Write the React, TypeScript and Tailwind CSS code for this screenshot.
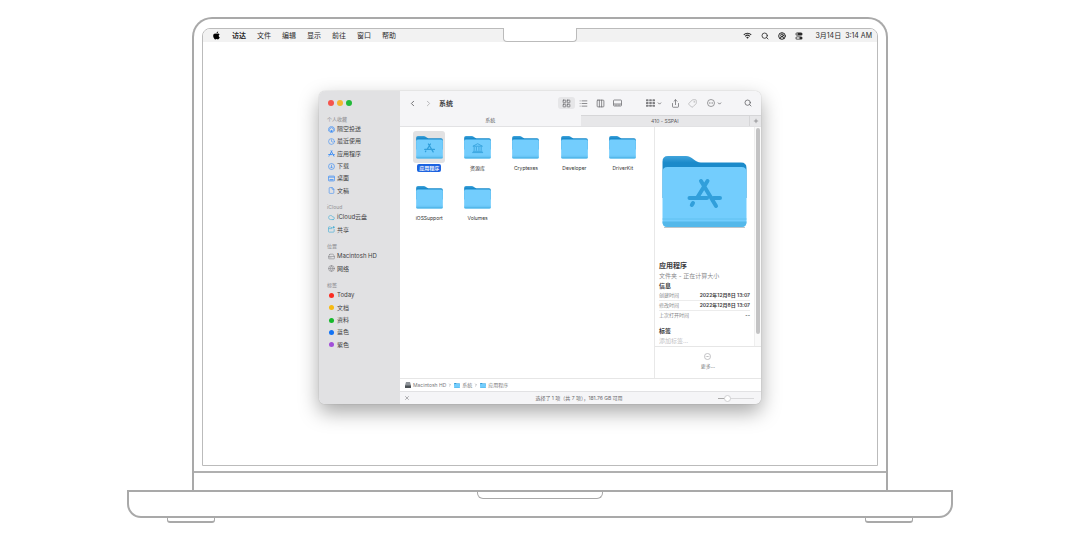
import type { ReactNode } from "react";
import {
  ChevronDown,
  ChevronLeft,
  ChevronRight,
  CircleUserRound,
  Clock,
  Cloud,
  Columns3,
  File,
  Globe,
  HardDrive,
  LayoutGrid,
  List,
  Plus,
  Search,
  Share,
  Tag,
  X,
} from "lucide-react";
import { FaApple } from "react-icons/fa";

type Glyph = "apps" | "library";

const menus = ["文件", "编辑", "显示", "前往", "窗口", "帮助"];

const folders: { name: string; glyph?: Glyph; selected?: boolean }[] = [
  { name: "应用程序", glyph: "apps", selected: true },
  { name: "资源库", glyph: "library" },
  { name: "Cryptexes" },
  { name: "Developer" },
  { name: "DriverKit" },
  { name: "iOSSupport" },
  { name: "Volumes" },
];

const details = [
  { label: "创建时间", value: "2022年12月8日 13:07" },
  { label: "修改时间", value: "2022年12月8日 13:07" },
  { label: "上次打开时间", value: "--" },
];

const blue = "size-[7px] text-[#3b8cf5]";
const teal = "size-[7px] text-[#45aed6]";
const gray = "size-[7px] text-[#85858a]";

function AppsGlyph() {
  return (
    <path
      d="M39 25l15 25M45.500 25L35 42M31 47l-1.200 2M27.500 42H45M51.500 42H58"
      fill="none"
      stroke="#319fdb"
      strokeWidth="4"
      strokeLinecap="round"
    />
  );
}

function LibraryGlyph() {
  return (
    <g fill="none" stroke="#319fdb" strokeWidth="2.600">
      <path d="M28 32l15-8 15 8z" />
      <path d="M32 34v12M39 34v12M47 34v12M54 34v12M28 48h30M26 52h34" />
    </g>
  );
}

function Folder({ className, glyph }: { className: string; glyph?: Glyph }) {
  return (
    <svg viewBox="0 0 85 72" className={className} aria-hidden="true">
      <defs>
        <linearGradient id="folder-back" x1="0" y1="0" x2="0" y2="1">
          <stop offset="0" stopColor="#42a5dc" />
          <stop offset="0.16" stopColor="#1b8aca" />
          <stop offset="1" stopColor="#1b8aca" />
        </linearGradient>
      </defs>
      <path d="M2 71.500h81" stroke="#5c6f7a" strokeOpacity="0.4" />
      <path
        d="M.5 5.500Q.5 0 6 0h18c6 0 9 6.500 15 6.500h40q5.500 0 5.500 5.500v30H.5z"
        fill="url(#folder-back)"
      />
      <path
        d="M.5 16q0-5 5-5h74q5 0 5 5v50q0 5-5 5h-74q-5 0-5-5z"
        fill="#73cdfd"
      />
      <path d="M.5 65.500h84v.5q0 5-5 5h-74q-5 0-5-5z" fill="#54b8ea" />
      <path d="M.5 63h84" stroke="#61c0f0" strokeWidth="1" />
      {glyph === "apps" && <AppsGlyph />}
      {glyph === "library" && <LibraryGlyph />}
    </svg>
  );
}

function ControlCenterIcon() {
  return (
    <svg viewBox="0 0 16 16" className="size-2" aria-hidden="true">
      <rect x="1" y="1" width="14" height="6" rx="3" fill="currentColor" />
      <circle cx="4" cy="4" r="1.600" fill="#f2f2f2" />
      <rect x="1" y="9" width="14" height="6" rx="3" fill="currentColor" />
      <rect x="2.500" y="10.400" width="7" height="3.200" rx="1.600" fill="#f2f2f2" />
    </svg>
  );
}

function WifiIcon() {
  return (
    <svg viewBox="0 0 20 16" className="h-[7px] w-[9px]" aria-hidden="true">
      <g fill="none" stroke="currentColor" strokeWidth="2.400">
        <path d="M1.500 6.500a12 12 0 0 1 17 0" />
        <path d="M4.800 9.800a7.400 7.400 0 0 1 10.400 0" />
      </g>
      <path d="M10 15.500l-3-3a4.200 4.200 0 0 1 6 0z" fill="currentColor" />
    </svg>
  );
}

function AirDropIcon() {
  return (
    <svg viewBox="0 0 16 16" className={blue} fill="none" stroke="currentColor" strokeWidth="1.600">
      <path d="M3.500 13.500a7 7 0 1 1 9 0" />
      <path d="M5 11.500a4.400 4.400 0 1 1 6 0" />
      <path d="M8 8.500l4 6.500H4z" fill="currentColor" stroke="none" />
    </svg>
  );
}

function AppStoreIcon() {
  return (
    <svg
      viewBox="0 0 16 16"
      className={blue}
      fill="none"
      stroke="currentColor"
      strokeWidth="2.200"
      strokeLinecap="round"
    >
      <path d="M7 2l6.500 12M9 2L4.500 10.500M2.800 13.300l-.4.700M1.500 10.500h7.500M12.500 10.500h2" />
    </svg>
  );
}

function DownloadIcon() {
  return (
    <svg viewBox="0 0 16 16" className={blue} fill="none" stroke="currentColor" strokeWidth="1.500">
      <circle cx="8" cy="8" r="6.800" />
      <path d="M8 4v7.500M5 8.500l3 3 3-3" />
    </svg>
  );
}

function DesktopIcon() {
  return (
    <svg viewBox="0 0 16 16" className={blue} fill="none" stroke="currentColor" strokeWidth="1.600">
      <rect x="1" y="2.500" width="14" height="11" rx="1.500" />
      <path d="M1 5h14" />
      <path d="M3.500 11h9" strokeWidth="2.400" />
    </svg>
  );
}

function SharedIcon() {
  return (
    <svg viewBox="0 0 16 16" className={teal} fill="none" stroke="currentColor" strokeWidth="1.500">
      <path d="M10 3.500H7L5.500 2H2.500Q1 2 1 3.500v9Q1 14 2.500 14h10q1.500 0 1.500-1.500V7M1 6h9" />
      <circle cx="13" cy="3" r="1.600" fill="currentColor" />
    </svg>
  );
}

function GalleryIcon() {
  return (
    <svg viewBox="0 0 18 16" className="h-2 w-[9px]" fill="none" stroke="currentColor" strokeWidth="1.500">
      <rect x="1" y="2" width="16" height="12" rx="1.500" />
      <path d="M1 10h16" />
      <path d="M3.500 12.200h11" strokeDasharray="2 1" />
    </svg>
  );
}

function GroupIcon() {
  return (
    <svg viewBox="0 0 18 16" className="h-2 w-[9px]" fill="currentColor">
      {[1, 6.500, 12].map((y) => (
        <g key={y}>
          <rect x="0" y={y - 0.5} width="5" height="3.800" rx="1" opacity="0.85" />
          <rect x="6.500" y={y - 0.5} width="5" height="3.800" rx="1" opacity="0.85" />
          <rect x="13" y={y - 0.5} width="5" height="3.800" rx="1" opacity="0.85" />
        </g>
      ))}
    </svg>
  );
}

function MoreIcon({ className }: { className: string }) {
  return (
    <svg viewBox="0 0 16 16" className={className} fill="none" stroke="currentColor" strokeWidth="1.300">
      <circle cx="8" cy="8" r="7" />
      <path d="M4 8h1.800M7.100 8h1.800M10.200 8H12" strokeWidth="1.800" />
    </svg>
  );
}

function Dot({ className }: { className: string }) {
  return <span className={`size-[5px] rounded-full ${className}`} />;
}

const sections: { title: string; height: string; items: { name: string; icon: ReactNode }[] }[] = [
  {
    title: "个人收藏",
    height: "h-[74px]",
    items: [
      { name: "隔空投送", icon: <AirDropIcon /> },
      { name: "最近使用", icon: <Clock className={blue} /> },
      { name: "应用程序", icon: <AppStoreIcon /> },
      { name: "下载", icon: <DownloadIcon /> },
      { name: "桌面", icon: <DesktopIcon /> },
      { name: "文稿", icon: <File className={blue} /> },
    ],
  },
  {
    title: "iCloud",
    height: "h-[25px]",
    items: [
      { name: "iCloud云盘", icon: <Cloud className={teal} /> },
      { name: "共享", icon: <SharedIcon /> },
    ],
  },
  {
    title: "位置",
    height: "h-[25px]",
    items: [
      { name: "Macintosh HD", icon: <HardDrive className={gray} /> },
      { name: "网络", icon: <Globe className={gray} /> },
    ],
  },
  {
    title: "标签",
    height: "h-[62px]",
    items: [
      { name: "Today", icon: <Dot className="bg-[#fb2c22]" /> },
      { name: "文档", icon: <Dot className="bg-[#f6b911]" /> },
      { name: "资料", icon: <Dot className="bg-[#16b92b]" /> },
      { name: "蓝色", icon: <Dot className="bg-[#1273f5]" /> },
      { name: "紫色", icon: <Dot className="bg-[#a24fd8]" /> },
    ],
  },
];

function MenuBar() {
  return (
    <header className="flex h-[13px] items-center justify-between rounded-t-[7px] bg-[#f2f2f2] pr-[5px] pl-[9px] text-[7px] text-[#2b2b2b]">
      <nav className="flex items-center gap-[11px]">
        <button aria-label="苹果菜单">
          <FaApple className="size-[9px] text-black" />
        </button>
        <button className="font-bold">访达</button>
        {menus.map((name) => (
          <button key={name}>{name}</button>
        ))}
      </nav>
      <div className="flex items-center gap-[9px]">
        <button aria-label="无线局域网">
          <WifiIcon />
        </button>
        <button aria-label="搜索">
          <Search className="size-2" strokeWidth={2.5} />
        </button>
        <button aria-label="用户">
          <CircleUserRound className="size-2" strokeWidth={3} />
        </button>
        <button aria-label="控制中心">
          <ControlCenterIcon />
        </button>
        <button className="ml-[3px] flex gap-1 whitespace-nowrap">
          <span>3月14日</span>
          <span>3:14 AM</span>
        </button>
      </div>
    </header>
  );
}

function Sidebar() {
  return (
    <aside className="flex w-[81px] shrink-0 flex-col gap-1.5 bg-[#e1e1e3] pl-2">
      <div className="mb-[3px] flex h-[15px] items-end gap-[3px] pl-[9px] -ml-2">
        <button aria-label="关闭" className="size-1.5 rounded-full bg-[#f5544d]" />
        <button aria-label="最小化" className="size-1.5 rounded-full bg-[#f3b62f]" />
        <button aria-label="缩放" className="size-1.5 rounded-full bg-[#22b93a]" />
      </div>
      {sections.map((section) => (
        <section key={section.title}>
          <h2 className="h-2 text-[5px] leading-[8px] font-medium text-[#9a9a9e]">
            {section.title}
          </h2>
          <ul className={`flex flex-col ${section.height}`}>
            {section.items.map((item) => (
              <li key={item.name} className="flex flex-1 items-center">
                <button className="flex items-center gap-0.5 text-[6px] text-[#3f3f42]">
                  <span className="flex w-2 justify-center">{item.icon}</span>
                  {item.name}
                </button>
              </li>
            ))}
          </ul>
        </section>
      ))}
    </aside>
  );
}

function Toolbar() {
  return (
    <div className="flex h-6 items-center bg-[#f5f5f7] pr-[9px] pl-2 text-[#6a6a6d]">
      <button aria-label="后退">
        <ChevronLeft className="size-[9px]" strokeWidth={2.5} />
      </button>
      <button aria-label="前进" className="ml-[7px] text-[#b5b5b8]">
        <ChevronRight className="size-[9px]" strokeWidth={2.5} />
      </button>
      <h1 className="ml-1.5 text-[7px] font-bold text-[#444446]">系统</h1>
      <div className="ml-auto flex items-center">
        <button aria-label="图标" className="flex h-3 w-[17px] items-center justify-center rounded-[3px] bg-[#e6e6e8]">
          <LayoutGrid className="size-[9px]" />
        </button>
        <button aria-label="列表" className="flex w-[17px] justify-center">
          <List className="size-[9px]" />
        </button>
        <button aria-label="分栏" className="flex w-[17px] justify-center">
          <Columns3 className="size-[9px]" />
        </button>
        <button aria-label="画廊" className="flex w-[17px] justify-center">
          <GalleryIcon />
        </button>
      </div>
      <button aria-label="分组" className="ml-5 flex items-center gap-0.5">
        <GroupIcon />
        <ChevronDown className="size-[5px]" strokeWidth={4} />
      </button>
      <button aria-label="共享" className="ml-[5px] flex w-[17px] justify-center">
        <Share className="size-[9px]" />
      </button>
      <button aria-label="标签" className="flex w-[17px] justify-center text-[#b0b0b3]">
        <Tag className="size-[9px] rotate-90" />
      </button>
      <button aria-label="更多操作" className="ml-1.5 flex items-center gap-0.5">
        <MoreIcon className="size-2" />
        <ChevronDown className="size-[5px]" strokeWidth={4} />
      </button>
      <button aria-label="搜索" className="ml-[22px]">
        <Search className="size-2" strokeWidth={2.5} />
      </button>
    </div>
  );
}

function TabBar() {
  return (
    <div className="flex h-3 border-b border-[#e2e2e4] bg-[#f5f5f7] text-[5px] text-[#5a5a5d]">
      <button className="flex-1">系统</button>
      <div className="flex flex-1 border-t border-[#d6d6d8] bg-[#e7e7e9]">
        <button className="flex-1">410 - SSPAI</button>
        <button
          aria-label="新建标签页"
          className="flex w-3 items-center justify-center border-l border-[#d6d6d8]"
        >
          <Plus className="size-1.5" />
        </button>
      </div>
    </div>
  );
}

function Files() {
  return (
    <ul className="grid flex-1 grid-cols-5 content-start gap-y-[9px] pt-1 pr-[7px] pl-[5px]">
      {folders.map((folder) => (
        <li key={folder.name} className="flex justify-center">
          <button className="flex flex-col items-center gap-px">
            <span
              className={`flex size-8 items-center justify-center rounded-[3px] ${
                folder.selected ? "bg-[#e2e2e3]" : ""
              }`}
            >
              <Folder className="h-[23px] w-[27px]" glyph={folder.glyph} />
            </span>
            <span
              className={`rounded-[2px] px-0.5 text-[5px] leading-[8px] ${
                folder.selected ? "bg-[#1b62e0] font-medium text-white" : "text-[#333]"
              }`}
            >
              {folder.name}
            </span>
          </button>
        </li>
      ))}
    </ul>
  );
}

function Preview() {
  return (
    <aside className="flex w-[107px] shrink-0 flex-col border-l border-[#e8e8e8]">
      <div className="flex">
        <div className="flex-1 px-1 pt-[29px] pb-px">
          <Folder className="mx-auto h-[72px] w-[85px]" glyph="apps" />
          <h2 className="mt-[33px] text-[7px] leading-[10px] font-bold text-[#3a3a3c]">应用程序</h2>
          <p className="text-[6px] leading-[10px] text-[#88888b]">文件夹 - 正在计算大小</p>
          <h3 className="text-[6px] leading-[10px] font-bold text-[#3a3a3c]">信息</h3>
          <dl className="text-[5px] leading-[9px]">
            {details.map((row) => (
              <div
                key={row.label}
                className="flex justify-between border-b border-[#ececec] whitespace-nowrap last:border-transparent"
              >
                <dt className="text-[#88888b]">{row.label}</dt>
                <dd className="font-semibold text-[#3a3a3c]">{row.value}</dd>
              </div>
            ))}
          </dl>
          <label htmlFor="tags" className="mt-[5px] block text-[6px] leading-[10px] font-bold text-[#3a3a3c]">
            标签
          </label>
          <input
            id="tags"
            placeholder="添加标签…"
            className="block h-[9px] w-full text-[6px] leading-[9px] outline-none placeholder:text-[#c2c2c4]"
          />
        </div>
        <div className="w-[7px] border-l border-[#efefef] bg-[#fafafa] px-px pt-px pb-3">
          <div className="h-full w-1 rounded-full bg-[#c3c3c4]" />
        </div>
      </div>
      <div className="flex flex-1 flex-col items-center justify-center border-t border-[#e6e6e6] pb-1 text-[5px] text-[#7c7c7f]">
        <button className="flex flex-col items-center gap-1">
          <MoreIcon className="size-[7px] text-[#9a9a9d]" />
          更多…
        </button>
      </div>
    </aside>
  );
}

function PathBar() {
  return (
    <nav className="flex h-[13px] items-center gap-0.5 border-t border-[#e6e6e6] pl-[5px] text-[5px] text-[#77777a]">
      <svg viewBox="0 0 12 12" className="size-1.5" aria-hidden="true">
        <path d="M2 0h8l2 7v5H0V7z" fill="#8d9298" />
        <path d="M0 7h12v5H0z" fill="#4d5257" />
      </svg>
      <button>Macintosh HD</button>
      <ChevronRight className="size-1" strokeWidth={3} />
      <Folder className="h-[5px] w-1.5" />
      <button>系统</button>
      <ChevronRight className="size-1" strokeWidth={3} />
      <Folder className="h-[5px] w-1.5" />
      <button>应用程序</button>
    </nav>
  );
}

function StatusBar() {
  return (
    <footer className="grid h-[13px] grid-cols-[1fr_auto_1fr] items-center border-t border-[#e2e2e4] bg-[#f5f5f7] pr-[7px] pl-1 text-[5px] text-[#69696c]">
      <X className="size-1.5" aria-hidden="true" />
      <p>选择了 1 项（共 7 项），181.76 GB 可用</p>
      <input
        type="range"
        aria-label="图标大小"
        min={0}
        max={100}
        defaultValue={22}
        className="h-px w-9 appearance-none justify-self-end bg-[linear-gradient(to_right,#aaa_24%,#d9d9db_24%)] [&::-webkit-slider-thumb]:size-[7px] [&::-webkit-slider-thumb]:appearance-none [&::-webkit-slider-thumb]:rounded-full [&::-webkit-slider-thumb]:border [&::-webkit-slider-thumb]:border-[#cfcfd1] [&::-webkit-slider-thumb]:bg-white"
      />
    </footer>
  );
}

function FinderWindow() {
  return (
    <div className="mx-[116px] mt-[49px] mb-[61px] flex overflow-hidden rounded-[6px] bg-white shadow-[0_0_1px_rgba(0,0,0,0.35),0_8px_20px_rgba(0,0,0,0.35)]">
      <Sidebar />
      <main className="flex min-w-0 flex-1 flex-col">
        <Toolbar />
        <TabBar />
        <div className="flex min-h-[251px] flex-1">
          <Files />
          <Preview />
        </div>
        <PathBar />
        <StatusBar />
      </main>
    </div>
  );
}

function Foot() {
  return <div className="h-[5px] w-12 rounded-b-[3px] border border-t-0 border-b-2 border-[#a9a9a9]" />;
}

export default function App() {
  return (
    <div className="bg-white px-[127px] pt-[17px] font-['Inter','Noto_Sans_CJK_SC',sans-serif] leading-none">
      <div className="mx-[65px] rounded-t-[20px] border-2 border-b-0 border-[#a9a9a9]">
        <div className="px-2 pt-[9px] pb-[5px]">
          <div className="relative rounded-t-[8px] border border-[#bbb]">
            <MenuBar />
            <div className="absolute -top-px left-1/2 h-[14px] w-[74px] -translate-x-1/2 rounded-b-[4px] border border-t-0 border-[#bbb] bg-white" />
            <FinderWindow />
          </div>
        </div>
        <div className="h-[19px] border-t-2 border-[#b0b0b0]" />
      </div>
      <div className="flex h-7 justify-center rounded-b-[14px] border-2 border-[#a9a9a9]">
        <div className="h-[7px] w-[126px] rounded-b-[6px] border border-t-0 border-[#a9a9a9]" />
      </div>
      <div className="flex justify-between px-10">
        <Foot />
        <Foot />
      </div>
    </div>
  );
}
